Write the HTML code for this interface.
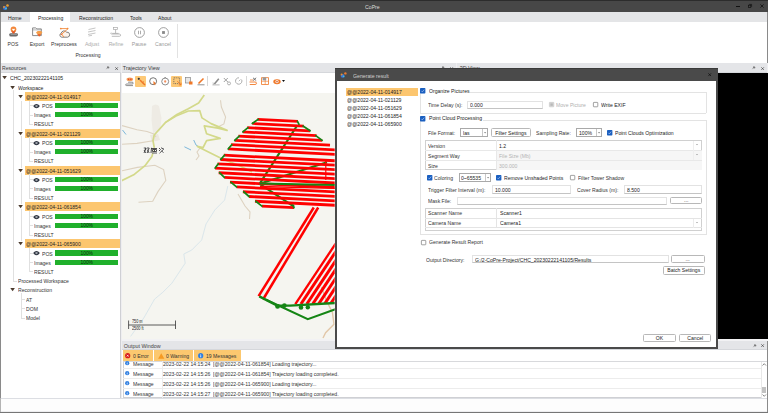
<!DOCTYPE html>
<html><head><meta charset="utf-8"><style>
*{box-sizing:border-box;margin:0;padding:0}
html,body{width:768px;height:413px;overflow:hidden;background:#f0f0f0;font-family:"Liberation Sans",sans-serif;font-size:5.1px;color:#222}
.a{position:absolute}
.t{position:absolute;white-space:nowrap;line-height:1}
svg{position:absolute;overflow:visible}
</style></head><body>
<div class="a" style="left:0px;top:0px;width:768px;height:12px;background:#474747"></div>
<div class="a" style="left:0px;top:0px;width:768px;height:1px;background:#2c2c2c"></div>
<div class="t" style="left:364.6px;top:4.43px;font-size:6.14px;color:#dcdcdc;transform:scaleX(0.8475);transform-origin:0 50%;">CoPre</div>
<svg style="left:2px;top:3px" width="8" height="8" viewBox="0 0 8 8"><circle cx="3" cy="5" r="2" fill="#3a6fd8"/><circle cx="2" cy="4" r="1" fill="#e8902a"/><circle cx="5.5" cy="2.5" r="1.3" fill="#e8a030"/><circle cx="4" cy="5.5" r="1" fill="#40c0e0"/></svg>
<div class="a" style="left:736px;top:6.2px;width:3.5px;height:0.8px;background:#111"></div>
<svg style="left:747.5px;top:4px" width="4" height="4" viewBox="0 0 4 4"><rect x="0.4" y="1.2" width="2.4" height="2.4" fill="none" stroke="#111" stroke-width="0.7"/><path d="M1.2 0.4H3.6V2.8" fill="none" stroke="#111" stroke-width="0.7"/></svg>
<svg style="left:759.5px;top:4.3px" width="4" height="4" viewBox="0 0 4 4"><path d="M0.4 0.4L3.6 3.6M3.6 0.4L0.4 3.6" stroke="#111" stroke-width="0.8"/></svg>
<div class="a" style="left:0px;top:12px;width:768px;height:10px;background:#e4e5e7"></div>
<div class="a" style="left:30px;top:12px;width:40px;height:10px;background:#fff"></div>
<div class="t" style="left:8px;top:15.49px;font-size:6.02px;color:#222;transform:scaleX(0.8475);transform-origin:0 50%;">Home</div>
<div class="t" style="left:37.7px;top:15.49px;font-size:6.02px;color:#222;transform:scaleX(0.8475);transform-origin:0 50%;">Processing</div>
<div class="t" style="left:78.6px;top:15.49px;font-size:6.02px;color:#222;transform:scaleX(0.8475);transform-origin:0 50%;">Reconstruction</div>
<div class="t" style="left:129.7px;top:15.49px;font-size:6.02px;color:#222;transform:scaleX(0.8475);transform-origin:0 50%;">Tools</div>
<div class="t" style="left:158px;top:15.49px;font-size:6.02px;color:#222;transform:scaleX(0.8475);transform-origin:0 50%;">About</div>
<div class="a" style="left:0px;top:22px;width:768px;height:41px;background:#fff"></div>
<div class="a" style="left:177px;top:24px;width:1px;height:34px;background:#e2e2e2"></div>
<div class="t" style="left:-16.7px;width:60px;text-align:center;top:41.4px;font-size:6.0px;color:#333;transform:scaleX(0.85)">POS</div>
<div class="t" style="left:7.299999999999997px;width:60px;text-align:center;top:41.4px;font-size:6.0px;color:#333;transform:scaleX(0.85)">Export</div>
<div class="t" style="left:34px;width:60px;text-align:center;top:41.4px;font-size:6.0px;color:#333;transform:scaleX(0.85)">Preprocess</div>
<div class="t" style="left:61.7px;width:60px;text-align:center;top:41.4px;font-size:6.0px;color:#aaa;transform:scaleX(0.85)">Adjust</div>
<div class="t" style="left:85.6px;width:60px;text-align:center;top:41.4px;font-size:6.0px;color:#aaa;transform:scaleX(0.85)">Refine</div>
<div class="t" style="left:109.19999999999999px;width:60px;text-align:center;top:41.4px;font-size:6.0px;color:#999;transform:scaleX(0.85)">Pause</div>
<div class="t" style="left:133.4px;width:60px;text-align:center;top:41.4px;font-size:6.0px;color:#999;transform:scaleX(0.85)">Cancel</div>
<div class="t" style="left:58px;width:60px;text-align:center;top:52.099999999999994px;font-size:6.0px;color:#333;transform:scaleX(0.85)">Processing</div>

<svg style="left:8px;top:26px" width="11" height="11" viewBox="0 0 11 11">
 <path d="M1.2 8.4 Q1.2 7.2 3 7.2 H8.5 Q10 7.2 10 8.6 Q10 10.6 8 10.6 H3 Q1.2 10.6 1.2 8.4Z" fill="#6a6a6a"/>
 <path d="M2.2 8.2 Q2.4 7.9 3.2 7.9 H8.5 Q9.2 8 9.2 8.6 H3Z" fill="#bdbdbd"/>
 <path d="M5.5 7.8 C3.3 5.6 2.6 4.6 2.6 3.5 A2.9 2.9 0 0 1 8.4 3.5 C8.4 4.6 7.7 5.6 5.5 7.8Z" fill="#f2873a"/>
 <path d="M5.5 7.8 C4.2 6.6 3.6 5.8 3.3 5.2 H7.7 C7.4 5.8 6.8 6.6 5.5 7.8Z" fill="#e25a2a"/>
 <path d="M5.5 5 L4.3 3.8 A0.7 0.7 0 0 1 5.5 3 A0.7 0.7 0 0 1 6.7 3.8Z" fill="#fff"/>
</svg>
<svg style="left:32px;top:27px" width="11" height="10" viewBox="0 0 11 10">
 <path d="M0.6 0.9 H3.8 L4.8 1.9 H9.3 V8.6 H0.6Z" fill="none" stroke="#6e6e6e" stroke-width="0.8"/>
 <path d="M0.6 2.9 H9.3" stroke="#888" stroke-width="0.6"/>
 <path d="M4 5.6 L5.6 4 H9 L10.4 5.6 L7.2 9.6Z" fill="#f59f4c"/>
 <path d="M5.2 7.2 H9.2 L7.2 9.6Z" fill="#e5582a"/>
</svg>
<svg style="left:59px;top:26.5px" width="11" height="11" viewBox="0 0 11 11">
 <path d="M2.6 10.2 A2.1 2.1 0 0 1 2.2 6.2 A3 3 0 0 1 7.6 5.2 A2.3 2.3 0 0 1 8.6 10.2Z" fill="#fdf3ea" stroke="#6a6a6a" stroke-width="0.85"/>
 <path d="M2 1.6 H9.2 M9.2 1.6 L2.6 7.2 L5 10" fill="none" stroke="#f28a3c" stroke-width="0.9"/>
 <path d="M8 0.6 L9.6 1.6 L8 2.6Z" fill="#f28a3c"/>
 <circle cx="1.8" cy="1.6" r="0.9" fill="#f28a3c"/><circle cx="2.6" cy="7.2" r="0.8" fill="#f07030"/>
</svg>
<svg style="left:86.5px;top:27px" width="10" height="10" viewBox="0 0 10 10">
 <path d="M1.5 2.5 L8.5 1 M1 5 L8.5 3.5 M1 7.5 L8.5 6 M1.5 9 L5 8.3" stroke="#b8b8b8" stroke-width="0.8" fill="none"/>
</svg>
<svg style="left:110px;top:27px" width="11" height="10" viewBox="0 0 11 10">
 <rect x="3.6" y="0.4" width="4" height="2" fill="none" stroke="#aaa" stroke-width="0.7"/>
 <path d="M5.6 2.4 V6.2" stroke="#aaa" stroke-width="0.8"/>
 <path d="M1.2 5.6 Q0.4 6.4 1.2 7 H9.4 Q10.6 7.2 10.6 8.2 Q10.6 9.3 9.4 9.3 H1.8" fill="none" stroke="#aaa" stroke-width="0.8"/>
 <path d="M2.2 6.4 H8.6" stroke="#aaa" stroke-width="0.8"/>
</svg>
<svg style="left:133.7px;top:26.9px" width="11" height="11" viewBox="0 0 11 11">
 <circle cx="5.5" cy="5.5" r="4.9" fill="none" stroke="#888" stroke-width="0.8"/>
 <path d="M4.5 3.7 V7.3 M6.5 3.7 V7.3" stroke="#888" stroke-width="0.7"/>
</svg>
<svg style="left:157.9px;top:26.9px" width="11" height="11" viewBox="0 0 11 11">
 <circle cx="5.5" cy="5.5" r="4.9" fill="none" stroke="#888" stroke-width="0.8"/>
 <rect x="4.1" y="4.1" width="2.8" height="2.8" fill="#888"/>
</svg>

<div class="a" style="left:0px;top:63px;width:768px;height:350px;background:#eeeef0"></div>
<div class="a" style="left:0px;top:12px;width:1px;height:401px;background:#8a8a8a"></div>
<div class="a" style="left:767px;top:12px;width:1px;height:51px;background:#8a8a8a"></div>
<div class="a" style="left:767px;top:339.8px;width:1px;height:73px;background:#8a8a8a"></div>
<div class="a" style="left:1px;top:63px;width:120px;height:10px;background:#e4e5e8;border-bottom:1px solid #d5d7db"></div>
<div class="t" style="left:2px;top:66.25px;font-size:5.51px;color:#3a3a3a;transform:scaleX(0.9259);transform-origin:0 50%;">Resources</div>
<svg style="left:106px;top:66.3px" width="3.5" height="3.5" viewBox="0 0 4 4"><path d="M2.2 0.4 L3.6 1.8 L2.6 2.4 L1.6 1.4Z" fill="#777" stroke="#555" stroke-width="0.5"/><path d="M1.4 1.2 L2.8 2.6 M1.9 2.1 L0.4 3.6" stroke="#555" stroke-width="0.6"/></svg>
<svg style="left:114.5px;top:66.5px" width="3.2" height="3.2" viewBox="0 0 4 4"><path d="M0.4 0.4 L3.6 3.6 M3.6 0.4 L0.4 3.6" stroke="#444" stroke-width="0.9"/></svg>
<div class="a" style="left:1px;top:73px;width:120px;height:325px;background:#fff;border-right:1px solid #cfd0d4"></div>
<div class="t" style="left:9.9px;top:75.39px;font-size:6.02px;color:#222;transform:scaleX(0.8475);transform-origin:0 50%;">CHC_20230222141105</div>
<div class="t" style="left:17.9px;top:84.61px;font-size:6.02px;color:#222;transform:scaleX(0.8475);transform-origin:0 50%;">Workspace</div>
<div class="a" style="left:13px;top:90.02px;width:0.8px;height:190.62px;background:#e0e0e0"></div>
<div class="a" style="left:13px;top:280.64px;width:4px;height:0.8px;background:#e0e0e0"></div>
<div class="a" style="left:24.8px;top:91.74px;width:95.7px;height:9px;background:#fcc66f"></div>
<div class="t" style="left:26.2px;top:93.83px;font-size:6.02px;color:#222;transform:scaleX(0.8475);transform-origin:0 50%;">@@2022-04-11-014917</div>
<div class="a" style="left:29px;top:100.53999999999999px;width:0.8px;height:23.360000000000014px;background:#e0e0e0"></div>
<div class="a" style="left:29px;top:105.46000000000001px;width:4px;height:0.8px;background:#e0e0e0"></div>
<div class="a" style="left:29px;top:114.68px;width:4px;height:0.8px;background:#e0e0e0"></div>
<div class="a" style="left:29px;top:123.9px;width:4px;height:0.8px;background:#e0e0e0"></div>
<svg style="left:32.9px;top:103.86000000000001px" width="7" height="4.2" viewBox="0 0 7 4.2"><path d="M0.1 2.1 Q3.5 -2.3 6.9 2.1 Q3.5 6.5 0.1 2.1Z" fill="#2e3440"/><circle cx="3.5" cy="2.1" r="1.05" fill="#d8dce0"/><circle cx="3.5" cy="2.1" r="0.5" fill="#2e3440"/></svg>
<div class="t" style="left:41.8px;top:103.05px;font-size:6.02px;color:#333;transform:scaleX(0.8475);transform-origin:0 50%;">POS</div>
<div class="a" style="left:55.4px;top:102.91000000000001px;width:62.6px;height:5.1px;background:#20b02c"></div>
<div class="t" style="left:55.4px;width:62.6px;text-align:center;top:104.06px;font-size:4.8px;color:#062a08">100%</div>
<div class="a" style="left:55.4px;top:112.13000000000001px;width:62.6px;height:5.1px;background:#20b02c"></div>
<div class="t" style="left:55.4px;width:62.6px;text-align:center;top:113.28px;font-size:4.8px;color:#062a08">100%</div>
<div class="t" style="left:34px;top:112.27px;font-size:6.02px;color:#333;transform:scaleX(0.8475);transform-origin:0 50%;">Images</div>
<div class="t" style="left:33.7px;top:121.49px;font-size:6.02px;color:#333;transform:scaleX(0.8475);transform-origin:0 50%;">RESULT</div>
<div class="a" style="left:24.8px;top:128.62px;width:95.7px;height:9px;background:#fcc66f"></div>
<div class="t" style="left:26.2px;top:130.71px;font-size:6.02px;color:#222;transform:scaleX(0.8475);transform-origin:0 50%;">@@2022-04-11-021129</div>
<div class="a" style="left:29px;top:137.42000000000002px;width:0.8px;height:23.359999999999985px;background:#e0e0e0"></div>
<div class="a" style="left:29px;top:142.34px;width:4px;height:0.8px;background:#e0e0e0"></div>
<div class="a" style="left:29px;top:151.56px;width:4px;height:0.8px;background:#e0e0e0"></div>
<div class="a" style="left:29px;top:160.78px;width:4px;height:0.8px;background:#e0e0e0"></div>
<svg style="left:32.9px;top:140.74px" width="7" height="4.2" viewBox="0 0 7 4.2"><path d="M0.1 2.1 Q3.5 -2.3 6.9 2.1 Q3.5 6.5 0.1 2.1Z" fill="#2e3440"/><circle cx="3.5" cy="2.1" r="1.05" fill="#d8dce0"/><circle cx="3.5" cy="2.1" r="0.5" fill="#2e3440"/></svg>
<div class="t" style="left:41.8px;top:139.93px;font-size:6.02px;color:#333;transform:scaleX(0.8475);transform-origin:0 50%;">POS</div>
<div class="a" style="left:55.4px;top:139.79px;width:62.6px;height:5.1px;background:#20b02c"></div>
<div class="t" style="left:55.4px;width:62.6px;text-align:center;top:140.94px;font-size:4.8px;color:#062a08">100%</div>
<div class="a" style="left:55.4px;top:149.01px;width:62.6px;height:5.1px;background:#20b02c"></div>
<div class="t" style="left:55.4px;width:62.6px;text-align:center;top:150.16px;font-size:4.8px;color:#062a08">100%</div>
<div class="t" style="left:34px;top:149.15px;font-size:6.02px;color:#333;transform:scaleX(0.8475);transform-origin:0 50%;">Images</div>
<div class="t" style="left:33.7px;top:158.37px;font-size:6.02px;color:#333;transform:scaleX(0.8475);transform-origin:0 50%;">RESULT</div>
<div class="a" style="left:24.8px;top:165.5px;width:95.7px;height:9px;background:#fcc66f"></div>
<div class="t" style="left:26.2px;top:167.59px;font-size:6.02px;color:#222;transform:scaleX(0.8475);transform-origin:0 50%;">@@2022-04-11-051629</div>
<div class="a" style="left:29px;top:174.3px;width:0.8px;height:23.360000000000014px;background:#e0e0e0"></div>
<div class="a" style="left:29px;top:179.22px;width:4px;height:0.8px;background:#e0e0e0"></div>
<div class="a" style="left:29px;top:188.44px;width:4px;height:0.8px;background:#e0e0e0"></div>
<div class="a" style="left:29px;top:197.66000000000003px;width:4px;height:0.8px;background:#e0e0e0"></div>
<svg style="left:32.9px;top:177.62px" width="7" height="4.2" viewBox="0 0 7 4.2"><path d="M0.1 2.1 Q3.5 -2.3 6.9 2.1 Q3.5 6.5 0.1 2.1Z" fill="#2e3440"/><circle cx="3.5" cy="2.1" r="1.05" fill="#d8dce0"/><circle cx="3.5" cy="2.1" r="0.5" fill="#2e3440"/></svg>
<div class="t" style="left:41.8px;top:176.81px;font-size:6.02px;color:#333;transform:scaleX(0.8475);transform-origin:0 50%;">POS</div>
<div class="a" style="left:55.4px;top:176.67px;width:62.6px;height:5.1px;background:#20b02c"></div>
<div class="t" style="left:55.4px;width:62.6px;text-align:center;top:177.82px;font-size:4.8px;color:#062a08">100%</div>
<div class="a" style="left:55.4px;top:185.89px;width:62.6px;height:5.1px;background:#20b02c"></div>
<div class="t" style="left:55.4px;width:62.6px;text-align:center;top:187.04px;font-size:4.8px;color:#062a08">100%</div>
<div class="t" style="left:34px;top:186.03px;font-size:6.02px;color:#333;transform:scaleX(0.8475);transform-origin:0 50%;">Images</div>
<div class="t" style="left:33.7px;top:195.25px;font-size:6.02px;color:#333;transform:scaleX(0.8475);transform-origin:0 50%;">RESULT</div>
<div class="a" style="left:24.8px;top:202.38px;width:95.7px;height:9px;background:#fcc66f"></div>
<div class="t" style="left:26.2px;top:204.47px;font-size:6.02px;color:#222;transform:scaleX(0.8475);transform-origin:0 50%;">@@2022-04-11-061854</div>
<div class="a" style="left:29px;top:211.18px;width:0.8px;height:23.360000000000014px;background:#e0e0e0"></div>
<div class="a" style="left:29px;top:216.10000000000002px;width:4px;height:0.8px;background:#e0e0e0"></div>
<div class="a" style="left:29px;top:225.32px;width:4px;height:0.8px;background:#e0e0e0"></div>
<div class="a" style="left:29px;top:234.54000000000002px;width:4px;height:0.8px;background:#e0e0e0"></div>
<svg style="left:32.9px;top:214.50000000000003px" width="7" height="4.2" viewBox="0 0 7 4.2"><path d="M0.1 2.1 Q3.5 -2.3 6.9 2.1 Q3.5 6.5 0.1 2.1Z" fill="#2e3440"/><circle cx="3.5" cy="2.1" r="1.05" fill="#d8dce0"/><circle cx="3.5" cy="2.1" r="0.5" fill="#2e3440"/></svg>
<div class="t" style="left:41.8px;top:213.69px;font-size:6.02px;color:#333;transform:scaleX(0.8475);transform-origin:0 50%;">POS</div>
<div class="a" style="left:55.4px;top:213.55px;width:62.6px;height:5.1px;background:#20b02c"></div>
<div class="t" style="left:55.4px;width:62.6px;text-align:center;top:214.70px;font-size:4.8px;color:#062a08">100%</div>
<div class="a" style="left:55.4px;top:222.76999999999998px;width:62.6px;height:5.1px;background:#20b02c"></div>
<div class="t" style="left:55.4px;width:62.6px;text-align:center;top:223.92px;font-size:4.8px;color:#062a08">100%</div>
<div class="t" style="left:34px;top:222.91px;font-size:6.02px;color:#333;transform:scaleX(0.8475);transform-origin:0 50%;">Images</div>
<div class="t" style="left:33.7px;top:232.13px;font-size:6.02px;color:#333;transform:scaleX(0.8475);transform-origin:0 50%;">RESULT</div>
<div class="a" style="left:24.8px;top:239.26px;width:95.7px;height:9px;background:#fcc66f"></div>
<div class="t" style="left:26.2px;top:241.35px;font-size:6.02px;color:#222;transform:scaleX(0.8475);transform-origin:0 50%;">@@2022-04-11-065900</div>
<div class="a" style="left:29px;top:248.06px;width:0.8px;height:23.360000000000014px;background:#e0e0e0"></div>
<div class="a" style="left:29px;top:252.98000000000002px;width:4px;height:0.8px;background:#e0e0e0"></div>
<div class="a" style="left:29px;top:262.2px;width:4px;height:0.8px;background:#e0e0e0"></div>
<div class="a" style="left:29px;top:271.42px;width:4px;height:0.8px;background:#e0e0e0"></div>
<svg style="left:32.9px;top:251.38000000000002px" width="7" height="4.2" viewBox="0 0 7 4.2"><path d="M0.1 2.1 Q3.5 -2.3 6.9 2.1 Q3.5 6.5 0.1 2.1Z" fill="#2e3440"/><circle cx="3.5" cy="2.1" r="1.05" fill="#d8dce0"/><circle cx="3.5" cy="2.1" r="0.5" fill="#2e3440"/></svg>
<div class="t" style="left:41.8px;top:250.57px;font-size:6.02px;color:#333;transform:scaleX(0.8475);transform-origin:0 50%;">POS</div>
<div class="a" style="left:55.4px;top:250.43px;width:62.6px;height:5.1px;background:#20b02c"></div>
<div class="t" style="left:55.4px;width:62.6px;text-align:center;top:251.58px;font-size:4.8px;color:#062a08">100%</div>
<div class="a" style="left:55.4px;top:259.65px;width:62.6px;height:5.1px;background:#20b02c"></div>
<div class="t" style="left:55.4px;width:62.6px;text-align:center;top:260.80px;font-size:4.8px;color:#062a08">100%</div>
<div class="t" style="left:34px;top:259.79px;font-size:6.02px;color:#333;transform:scaleX(0.8475);transform-origin:0 50%;">Images</div>
<div class="t" style="left:33.7px;top:269.01px;font-size:6.02px;color:#333;transform:scaleX(0.8475);transform-origin:0 50%;">RESULT</div>
<div class="a" style="left:21px;top:100.53999999999999px;width:0.8px;height:143.22px;background:#e0e0e0"></div>
<div class="t" style="left:18px;top:278.23px;font-size:6.02px;color:#333;transform:scaleX(0.8475);transform-origin:0 50%;">Processed Workspace</div>
<div class="t" style="left:18px;top:287.45px;font-size:6.02px;color:#333;transform:scaleX(0.8475);transform-origin:0 50%;">Reconstruction</div>
<div class="a" style="left:21px;top:292.86px;width:0.8px;height:24.660000000000025px;background:#e0e0e0"></div>
<div class="a" style="left:21px;top:299.08000000000004px;width:4px;height:0.8px;background:#e0e0e0"></div>
<div class="t" style="left:26.2px;top:296.67px;font-size:6.02px;color:#333;transform:scaleX(0.8475);transform-origin:0 50%;">AT</div>
<div class="a" style="left:21px;top:308.3px;width:4px;height:0.8px;background:#e0e0e0"></div>
<div class="t" style="left:26.2px;top:305.89px;font-size:6.02px;color:#333;transform:scaleX(0.8475);transform-origin:0 50%;">DOM</div>
<div class="a" style="left:21px;top:317.52000000000004px;width:4px;height:0.8px;background:#e0e0e0"></div>
<div class="t" style="left:26.2px;top:315.11px;font-size:6.02px;color:#333;transform:scaleX(0.8475);transform-origin:0 50%;">Model</div>
<svg style="left:1.8000000000000003px;top:75.3px" width="5.2" height="5" viewBox="0 0 5.2 5"><rect x="0" y="0" width="5.2" height="5" fill="#fff"/><path d="M0.3 0.9 H4.9 L2.6 4.2Z" fill="#4b3b2e"/></svg>
<svg style="left:10.3px;top:84.52px" width="5.2" height="5" viewBox="0 0 5.2 5"><rect x="0" y="0" width="5.2" height="5" fill="#fff"/><path d="M0.3 0.9 H4.9 L2.6 4.2Z" fill="#4b3b2e"/></svg>
<svg style="left:18.2px;top:93.74px" width="5.2" height="5" viewBox="0 0 5.2 5"><rect x="0" y="0" width="5.2" height="5" fill="#fff"/><path d="M0.3 0.9 H4.9 L2.6 4.2Z" fill="#4b3b2e"/></svg>
<svg style="left:18.2px;top:130.62px" width="5.2" height="5" viewBox="0 0 5.2 5"><rect x="0" y="0" width="5.2" height="5" fill="#fff"/><path d="M0.3 0.9 H4.9 L2.6 4.2Z" fill="#4b3b2e"/></svg>
<svg style="left:18.2px;top:167.5px" width="5.2" height="5" viewBox="0 0 5.2 5"><rect x="0" y="0" width="5.2" height="5" fill="#fff"/><path d="M0.3 0.9 H4.9 L2.6 4.2Z" fill="#4b3b2e"/></svg>
<svg style="left:18.2px;top:204.38px" width="5.2" height="5" viewBox="0 0 5.2 5"><rect x="0" y="0" width="5.2" height="5" fill="#fff"/><path d="M0.3 0.9 H4.9 L2.6 4.2Z" fill="#4b3b2e"/></svg>
<svg style="left:18.2px;top:241.26px" width="5.2" height="5" viewBox="0 0 5.2 5"><rect x="0" y="0" width="5.2" height="5" fill="#fff"/><path d="M0.3 0.9 H4.9 L2.6 4.2Z" fill="#4b3b2e"/></svg>
<svg style="left:9.9px;top:287.36px" width="5.2" height="5" viewBox="0 0 5.2 5"><rect x="0" y="0" width="5.2" height="5" fill="#fff"/><path d="M0.3 0.9 H4.9 L2.6 4.2Z" fill="#4b3b2e"/></svg>
<div class="a" style="left:122.3px;top:63px;width:334px;height:10px;background:#e4e5e8;border-bottom:1px solid #d5d7db"></div>
<div class="t" style="left:122.8px;top:66.40px;font-size:5.40px;color:#3a3a3a;transform:scaleX(1.0000);transform-origin:0 50%;">Trajectory View</div>
<div class="a" style="left:457.4px;top:63px;width:310px;height:10px;background:#e4e5e8;border-bottom:1px solid #d5d7db"></div>
<div class="t" style="left:459.7px;top:66.40px;font-size:5.40px;color:#3a3a3a;transform:scaleX(1.0000);transform-origin:0 50%;">3D View</div>
<svg style="left:440.5px;top:66.3px" width="3.5" height="3.5" viewBox="0 0 4 4"><path d="M2.2 0.4 L3.6 1.8 L2.6 2.4 L1.6 1.4Z" fill="#777" stroke="#555" stroke-width="0.5"/><path d="M1.4 1.2 L2.8 2.6 M1.9 2.1 L0.4 3.6" stroke="#555" stroke-width="0.6"/></svg>
<svg style="left:449.5px;top:66.5px" width="3.2" height="3.2" viewBox="0 0 4 4"><path d="M0.4 0.4 L3.6 3.6 M3.6 0.4 L0.4 3.6" stroke="#444" stroke-width="0.9"/></svg>
<svg style="left:752px;top:66.3px" width="3.5" height="3.5" viewBox="0 0 4 4"><path d="M2.2 0.4 L3.6 1.8 L2.6 2.4 L1.6 1.4Z" fill="#777" stroke="#555" stroke-width="0.5"/><path d="M1.4 1.2 L2.8 2.6 M1.9 2.1 L0.4 3.6" stroke="#555" stroke-width="0.6"/></svg>
<svg style="left:761px;top:66.5px" width="3.2" height="3.2" viewBox="0 0 4 4"><path d="M0.4 0.4 L3.6 3.6 M3.6 0.4 L0.4 3.6" stroke="#444" stroke-width="0.9"/></svg>
<div class="a" style="left:122.3px;top:73px;width:334px;height:20.4px;background:#fff"></div>
<div class="a" style="left:135.1px;top:75.8px;width:11.2px;height:11px;background:#fdc977;border-radius:1px"></div>
<div class="a" style="left:171px;top:75.8px;width:11px;height:11px;background:#fdc977;border-radius:1px"></div>
<div class="a" style="left:207.4px;top:75.9px;width:0.8px;height:10px;background:#d8d8d8"></div>
<div class="a" style="left:245.6px;top:75.9px;width:0.8px;height:10px;background:#d8d8d8"></div>

<svg style="left:124.5px;top:76.8px" width="9" height="9" viewBox="0 0 9 9">
 <ellipse cx="4.8" cy="2.3" rx="3.3" ry="1.9" fill="#f5a05a"/><circle cx="3.6" cy="2.2" r="0.75" fill="#e0402a"/><circle cx="5.9" cy="2.3" r="0.75" fill="#e0402a"/>
 <path d="M3 5.2 H7.2 Q8.2 5.2 8.2 6.1 Q8.2 7 7.2 7 H1.8 Q0.6 7 0.6 7.9 Q0.6 8.6 1.6 8.6 H8" fill="none" stroke="#6a6a6a" stroke-width="0.75"/>
</svg>
<svg style="left:136.5px;top:77px" width="9" height="9" viewBox="0 0 9 9">
 <circle cx="1.8" cy="1.8" r="1.1" fill="#333"/><path d="M3 3 L8 8" stroke="#f07828" stroke-width="1.5"/><path d="M5 6 L7 4.5" stroke="#f07828" stroke-width="0.9"/>
</svg>
<svg style="left:149px;top:77.2px" width="8.4" height="8.4" viewBox="0 0 8 8">
 <path d="M4 0.7 A3.3 3.3 0 1 1 3.9 7.3 A3.3 3.3 0 1 1 4 0.7Z" fill="none" stroke="#5a5a5a" stroke-width="0.8"/><path d="M4.2 3.8 L6.8 6.2 L5.6 6.3 L6.2 7.6 L5.5 7.8 L5 6.6 L4.3 7.3Z" fill="#f07828"/>
</svg>
<svg style="left:161.2px;top:77.2px" width="8.4" height="8.4" viewBox="0 0 8 8">
 <circle cx="4" cy="4.3" r="3.3" fill="none" stroke="#777" stroke-width="0.8"/><path d="M3.2 0.6 H4.8" stroke="#777" stroke-width="0.7"/><circle cx="4" cy="4.3" r="1.1" fill="#f29060"/>
</svg>
<svg style="left:172.5px;top:77.2px" width="8.4" height="8.4" viewBox="0 0 8 8">
 <rect x="0.8" y="0.8" width="5.5" height="5.5" fill="none" stroke="#555" stroke-width="0.7" stroke-dasharray="1 0.8"/><path d="M4.2 4 L7.6 7.6 M5.5 7.5 H7.6 V5.4" stroke="#f07828" stroke-width="0.9" fill="none"/>
</svg>
<svg style="left:185px;top:77.3px" width="8" height="8" viewBox="0 0 8 8">
 <rect x="0.5" y="0.5" width="5" height="5.5" fill="#e8e8e8" stroke="#888" stroke-width="0.7"/><rect x="4" y="4.5" width="3.5" height="3" fill="#f07828"/>
</svg>
<svg style="left:197px;top:77px" width="8" height="8.5" viewBox="0 0 8 8.5">
 <path d="M1.5 6.5 L6.5 1.5" stroke="#f07828" stroke-width="1.6"/><path d="M0.5 7.8 H7.5" stroke="#444" stroke-width="0.6"/>
</svg>
<svg style="left:211.5px;top:77px" width="8" height="8.5" viewBox="0 0 8 8.5">
 <path d="M1.8 6.6 L6.2 1.2 L7.4 2.2 L3 7.4Z" fill="#8a8a8a"/><path d="M0.4 7.9 H7.6" stroke="#999" stroke-width="0.7"/><path d="M1 5.5 L1.6 7.6" stroke="#999" stroke-width="0.6"/>
</svg>
<svg style="left:223px;top:77px" width="8" height="8.5" viewBox="0 0 8 8.5">
 <path d="M0.8 1 L4.8 5 M4.8 1 L0.8 5" stroke="#a0a0a0" stroke-width="1" fill="none"/><circle cx="6" cy="6.4" r="1.5" fill="none" stroke="#a0a0a0" stroke-width="0.8"/>
</svg>
<svg style="left:235px;top:77.3px" width="8" height="8" viewBox="0 0 8 8">
 <path d="M6.6 2.6 A3.2 3.2 0 1 1 4 0.8" fill="none" stroke="#999" stroke-width="0.8"/><path d="M3.8 4.2 L5.5 2.5" stroke="#999" stroke-width="0.7"/>
</svg>
<svg style="left:248.8px;top:77px" width="8" height="8.5" viewBox="0 0 8 8.5">
 <path d="M4 0.8 L7.2 3.6 M7.2 0.8 L4 3.6" stroke="#555" stroke-width="0.8"/><path d="M0.5 5 H6 Q7.5 5 7.5 6.2 Q7.5 7.5 6 7.5 H0.8" fill="none" stroke="#f07828" stroke-width="0.9"/><path d="M1 3 H4" stroke="#f07828" stroke-width="0.8"/>
</svg>
<svg style="left:261px;top:77.2px" width="8" height="8.2" viewBox="0 0 8 8">
 <rect x="0.6" y="0.6" width="6.8" height="6.8" fill="#fff" stroke="#f07828" stroke-width="0.8"/><path d="M0.6 4.2 H7.4 M4.2 0.6 V7.4" stroke="#f07828" stroke-width="0.6"/><rect x="1.6" y="0.3" width="3.6" height="3" fill="#9a9a9a"/>
</svg>
<svg style="left:273px;top:78.6px" width="8" height="5.5" viewBox="0 0 8 5.5">
 <ellipse cx="4" cy="2.75" rx="3.7" ry="2.4" fill="#f07828"/><ellipse cx="4" cy="2.75" rx="1.6" ry="1.4" fill="#fff"/><circle cx="4" cy="2.75" r="0.8" fill="#c04010"/>
</svg>
<svg style="left:281.8px;top:80.3px" width="3" height="2" viewBox="0 0 3 2"><path d="M0 0 H3 L1.5 2Z" fill="#111"/></svg>

<div class="a" style="left:122px;top:93.4px;width:334.7px;height:245.4px;background:#f5f5f0"></div>
<svg style="left:0;top:0" width="768" height="413" viewBox="0 0 768 413">
<defs><clipPath id="mc"><rect x="122" y="93.4" width="212.7" height="245.4"/></clipPath>
<clipPath id="blk"><polygon points="257.1,118.6 297.5,120.6 299.0,124.0 305.6,125.6 311.8,131.2 320.0,134.5 325.5,140.5 336.0,145.0 336.0,206.7 294.0,208.5 263.4,208.3 258.3,204.1 243.0,192.7 229.0,183.8 217.6,176.2 213.8,172.3 216.4,166.0 222.7,157.1 231.6,145.6 239.3,136.7 248.2,127.8"/></clipPath>
<clipPath id="stp"><polygon points="338.0,238.0 294.0,304.0 338.0,304.0"/></clipPath>
</defs><g clip-path="url(#mc)">
<path d="M152 106 Q156 103 159 106 L161.5 118 L160 131 L153 133 L151.5 120Z" fill="#eeebe4"/>
<path d="M150 135 L158 134 L160 140 L152 142Z" fill="#ece8e0"/>
<polyline points="122.0,125.6 137.0,129.8 147.0,131.5 153.9,134.0 156.0,137.0" fill="none" stroke="#ddd2c0" stroke-width="1.1"/>
<polyline points="122.0,144.2 137.0,143.4 153.0,140.8" fill="none" stroke="#ddd2c0" stroke-width="1.1"/>
<polyline points="122.0,170.7 137.4,167.4 154.9,165.3 163.6,169.6 165.8,180.5 158.1,191.4 152.7,201.2 138.5,202.3" fill="none" stroke="#ddd2c0" stroke-width="1.1"/>
<polyline points="220.5,100.2 221.4,107.0 225.6,117.1 223.9,123.9 218.8,126.4" fill="none" stroke="#ddd2c0" stroke-width="1.1"/>
<polyline points="200.0,148.0 197.0,152.0 199.0,156.0 196.0,160.0" fill="none" stroke="#ddd2c0" stroke-width="1.1"/>
<polyline points="238.0,194.0 241.5,200.0 245.0,206.0 250.0,212.0 249.5,219.0" fill="none" stroke="#ddd2c0" stroke-width="1.1"/>
<polyline points="227.8,186.0 224.6,200.1 214.8,210.0 206.0,224.0 201.7,240.0 191.8,250.0 183.8,254.0 185.2,263.2 171.9,283.2 162.6,292.5 154.6,299.1 143.9,317.8 130.6,336.4" fill="none" stroke="#cfdfe8" stroke-width="0.7"/>
<polyline points="122.5,130.0 126.0,134.5" fill="none" stroke="#6fb0d8" stroke-width="0.9"/>
<polyline points="184.4,146.8 191.0,150.0" fill="none" stroke="#6fb0d8" stroke-width="0.9"/>
<polyline points="193.7,140.0 196.0,145.0 200.0,147.6" fill="none" stroke="#6fb0d8" stroke-width="0.9"/>
<polyline points="204.3,95.1 198.6,103.1 188.3,108.8 176.9,114.5 165.6,122.4 154.2,135.0 153.0,140.7 154.2,147.5 151.9,156.6 145.0,165.7 133.7,174.8 121.0,181.0" fill="none" stroke="#d3d98a" stroke-width="1.7" stroke-linejoin="round"/>
<polyline points="165.6,122.4 176.0,116.0 188.3,111.0 199.7,110.6 202.0,117.9 211.1,123.6 227.1,130.4 218.0,128.1 204.3,125.9 206.6,133.8 220.2,138.4 206.6,140.7 203.1,147.5 197.4,146.4 222.5,158.9 240.0,166.0 252.0,172.0" fill="none" stroke="#d3d98a" stroke-width="1.7" stroke-linejoin="round"/>
<polyline points="321.4,287.0 326.4,300.5 332.4,312.4 334.0,324.2 325.6,332.7 323.0,338.0" fill="none" stroke="#e2c7a8" stroke-width="1.4"/>
<polyline points="296.5,126.5 259.6,183.8" fill="none" stroke="#158515" stroke-width="2.2"/>
<polyline points="259.6,183.8 294.0,206.7" fill="none" stroke="#158515" stroke-width="2.2"/>
<polyline points="259.6,183.8 327.0,162.2" fill="none" stroke="#158515" stroke-width="2.2"/>
<line x1="257.5" y1="119.28" x2="298.0" y2="121.30" stroke="#ff0000" stroke-width="2.8"/>
<line x1="252.3" y1="123.46" x2="303.8" y2="126.04" stroke="#ff0000" stroke-width="2.8"/>
<line x1="247.2" y1="127.66" x2="310.1" y2="130.80" stroke="#ff0000" stroke-width="2.8"/>
<line x1="242.8" y1="131.89" x2="316.6" y2="135.58" stroke="#ff0000" stroke-width="2.8"/>
<line x1="238.4" y1="136.12" x2="322.2" y2="140.31" stroke="#ff0000" stroke-width="2.8"/>
<line x1="234.7" y1="140.39" x2="330.0" y2="145.15" stroke="#ff0000" stroke-width="2.8"/>
<line x1="231.1" y1="144.66" x2="340.0" y2="150.10" stroke="#ff0000" stroke-width="2.8"/>
<line x1="228.1" y1="148.96" x2="340.0" y2="154.55" stroke="#ff0000" stroke-width="2.8"/>
<line x1="223.8" y1="155.19" x2="340.0" y2="161.00" stroke="#ff0000" stroke-width="2.8"/>
<line x1="220.6" y1="159.48" x2="340.0" y2="165.45" stroke="#ff0000" stroke-width="2.8"/>
<line x1="217.5" y1="163.78" x2="340.0" y2="169.90" stroke="#ff0000" stroke-width="2.8"/>
<line x1="215.1" y1="168.11" x2="340.0" y2="174.35" stroke="#ff0000" stroke-width="2.8"/>
<line x1="218.7" y1="172.73" x2="340.0" y2="178.80" stroke="#ff0000" stroke-width="2.8"/>
<line x1="224.3" y1="177.46" x2="340.0" y2="183.25" stroke="#ff0000" stroke-width="2.8"/>
<line x1="230.0" y1="182.20" x2="340.0" y2="187.70" stroke="#ff0000" stroke-width="2.8"/>
<line x1="236.5" y1="186.97" x2="340.0" y2="192.15" stroke="#ff0000" stroke-width="2.8"/>
<line x1="242.9" y1="191.75" x2="340.0" y2="196.60" stroke="#ff0000" stroke-width="2.8"/>
<line x1="249.0" y1="196.50" x2="340.0" y2="201.05" stroke="#ff0000" stroke-width="2.8"/>
<line x1="255.0" y1="201.25" x2="340.0" y2="205.50" stroke="#ff0000" stroke-width="2.8"/>
<line x1="261.9" y1="206.05" x2="294.0" y2="207.65" stroke="#ff0000" stroke-width="2.8"/>
<line x1="258.3" y1="119.28" x2="252.3" y2="123.46" stroke="#158515" stroke-width="1.7" stroke-linecap="round"/>
<line x1="303.0" y1="126.04" x2="310.1" y2="130.80" stroke="#158515" stroke-width="1.7" stroke-linecap="round"/>
<line x1="248.0" y1="127.66" x2="242.8" y2="131.89" stroke="#158515" stroke-width="1.7" stroke-linecap="round"/>
<line x1="315.8" y1="135.58" x2="322.2" y2="140.31" stroke="#158515" stroke-width="1.7" stroke-linecap="round"/>
<line x1="239.2" y1="136.12" x2="234.7" y2="140.39" stroke="#158515" stroke-width="1.7" stroke-linecap="round"/>
<line x1="231.9" y1="144.66" x2="228.1" y2="148.96" stroke="#158515" stroke-width="1.7" stroke-linecap="round"/>
<line x1="224.6" y1="155.19" x2="220.6" y2="159.48" stroke="#158515" stroke-width="1.7" stroke-linecap="round"/>
<line x1="218.3" y1="163.78" x2="215.1" y2="168.11" stroke="#158515" stroke-width="1.7" stroke-linecap="round"/>
<line x1="219.5" y1="172.73" x2="224.3" y2="177.46" stroke="#158515" stroke-width="1.7" stroke-linecap="round"/>
<line x1="230.8" y1="182.20" x2="236.5" y2="186.97" stroke="#158515" stroke-width="1.7" stroke-linecap="round"/>
<line x1="243.7" y1="191.75" x2="249.0" y2="196.50" stroke="#158515" stroke-width="1.7" stroke-linecap="round"/>
<line x1="255.8" y1="201.25" x2="261.9" y2="206.05" stroke="#158515" stroke-width="1.7" stroke-linecap="round"/>
<line x1="297.5" y1="121.30" x2="299.0" y2="124.30" stroke="#158515" stroke-width="1.7" stroke-linecap="round"/>
<line x1="294" y1="207.65" x2="293" y2="205.15" stroke="#158515" stroke-width="1.7" stroke-linecap="round"/>
<line x1="259.6" y1="183.5" x2="336" y2="185" stroke="#158515" stroke-width="2"/>
<line x1="260" y1="186.5" x2="336" y2="188.5" stroke="#ff0000" stroke-width="1.3"/>
<line x1="325.8" y1="160.9" x2="325.8" y2="180" stroke="#ff0000" stroke-width="1.2"/>
<line x1="313.8" y1="207.5" x2="258.6" y2="296.2" stroke="#ff0000" stroke-width="2.5"/>
<line x1="318.2" y1="207.5" x2="263.0" y2="299.5" stroke="#ff0000" stroke-width="2.5"/>
<g clip-path="url(#stp)">
<line x1="295.0" y1="304" x2="341.0" y2="235" stroke="#ff0000" stroke-width="3"/>
<line x1="300.9" y1="304" x2="346.9" y2="235" stroke="#ff0000" stroke-width="3"/>
<line x1="306.8" y1="304" x2="352.8" y2="235" stroke="#ff0000" stroke-width="3"/>
<line x1="312.7" y1="304" x2="358.7" y2="235" stroke="#ff0000" stroke-width="3"/>
<line x1="318.6" y1="304" x2="364.6" y2="235" stroke="#ff0000" stroke-width="3"/>
<line x1="324.5" y1="304" x2="370.5" y2="235" stroke="#ff0000" stroke-width="3"/>
<line x1="330.4" y1="304" x2="376.4" y2="235" stroke="#ff0000" stroke-width="3"/>
<line x1="336.3" y1="304" x2="382.3" y2="235" stroke="#ff0000" stroke-width="3"/>
<line x1="342.2" y1="304" x2="388.2" y2="235" stroke="#ff0000" stroke-width="3"/>
<line x1="348.1" y1="304" x2="394.1" y2="235" stroke="#ff0000" stroke-width="3"/>
<line x1="354.0" y1="304" x2="400.0" y2="235" stroke="#ff0000" stroke-width="3"/>
<line x1="359.9" y1="304" x2="405.9" y2="235" stroke="#ff0000" stroke-width="3"/>
</g>
<polyline points="259.3,296.4 277.1,305.6 290.0,305.6 336.0,303.0" fill="none" stroke="#158515" stroke-width="2.4"/>
<polyline points="266.1,299.8 307.8,319.2 336.0,309.0" fill="none" stroke="#158515" stroke-width="2.1"/>
<circle cx="277.6" cy="306.4" r="2.4" fill="#158515"/>
<circle cx="284.4" cy="305.6" r="2.3" fill="#158515"/>
<circle cx="301" cy="307.5" r="2.3" fill="#158515"/>
<circle cx="307.8" cy="307.2" r="2.2" fill="#158515"/>
<path d="M128.6 325 H175.5 M128.6 320.5 V329 M175.5 320.5 V329" stroke="#333" stroke-width="0.8" fill="none"/>
</g></svg>
<div class="t" style="left:132px;top:320.16px;font-size:4.48px;color:#222;transform:scaleX(0.8475);transform-origin:0 50%;">750 m</div>
<div class="t" style="left:132px;top:326.96px;font-size:4.48px;color:#222;transform:scaleX(0.8475);transform-origin:0 50%;">2500 ft</div>
<svg style="left:143px;top:146.5px" width="22" height="7" viewBox="0 0 22 7"><g stroke="#fff" stroke-width="1.6" fill="none" opacity="0.7"><path d="M0.8 1 H3 L1.5 4 M3 1 L1 6 M1.2 3.5 L3 6 M3.8 1 H6.2 L4.2 6 M4.2 2.5 L6.2 6"/><path d="M8.5 0.8 L8 6 M8.2 1.5 H14 M9.5 2.5 H13.5 V4.5 H9.5Z M11.5 2.5 V4.5 M9 6 H14"/><path d="M16 1 L17.5 2.5 L16 4 M18 0.8 L20.8 2 L16.5 6.2 M18.5 4 L20.5 5.5"/></g><g stroke="#3c3c3c" stroke-width="0.9" fill="none"><path d="M0.8 1 H3 L1.5 4 M3 1 L1 6 M1.2 3.5 L3 6 M3.8 1 H6.2 L4.2 6 M4.2 2.5 L6.2 6"/><path d="M8.5 0.8 L8 6 M8.2 1.5 H14 M9.5 2.5 H13.5 V4.5 H9.5Z M11.5 2.5 V4.5 M9 6 H14"/><path d="M16 1 L17.5 2.5 L16 4 M18 0.8 L20.8 2 L16.5 6.2 M18.5 4 L20.5 5.5"/></g></svg>
<div class="a" style="left:457.4px;top:73px;width:311px;height:265.8px;background:#000"></div>
<div class="a" style="left:122px;top:338.8px;width:646px;height:2px;background:#f2f2f4"></div>
<div class="a" style="left:122px;top:340.8px;width:645px;height:9.5px;background:#e4e5e8;border-bottom:1px solid #d5d7db"></div>
<div class="t" style="left:123.8px;top:343.60px;font-size:5.40px;color:#444;transform:scaleX(1.0000);transform-origin:0 50%;">Output Window</div>
<svg style="left:752.5px;top:343.5px" width="3.5" height="3.5" viewBox="0 0 4 4"><path d="M2.2 0.4 L3.6 1.8 L2.6 2.4 L1.6 1.4Z" fill="#777" stroke="#555" stroke-width="0.5"/><path d="M1.4 1.2 L2.8 2.6 M1.9 2.1 L0.4 3.6" stroke="#555" stroke-width="0.6"/></svg>
<svg style="left:761px;top:343.7px" width="3.2" height="3.2" viewBox="0 0 4 4"><path d="M0.4 0.4 L3.6 3.6 M3.6 0.4 L0.4 3.6" stroke="#444" stroke-width="0.9"/></svg>
<div class="a" style="left:122px;top:350.2px;width:645px;height:48px;background:#fff"></div>
<div class="a" style="left:122.6px;top:350.2px;width:30.8px;height:10.8px;background:#fcc86f"></div>
<div class="a" style="left:154.4px;top:350.2px;width:39px;height:10.8px;background:#fcc86f"></div>
<div class="a" style="left:194.4px;top:350.2px;width:46.6px;height:10.8px;background:#fcc86f"></div>
<svg style="left:125px;top:353px" width="5.4" height="5.4" viewBox="0 0 6 6"><circle cx="3" cy="3" r="2.9" fill="#d81a1a"/><path d="M2 2 L4 4 M4 2 L2 4" stroke="#fff" stroke-width="0.8"/></svg>
<div class="t" style="left:133.3px;top:353.19px;font-size:6.02px;color:#333;transform:scaleX(0.8475);transform-origin:0 50%;">0 Error</div>
<svg style="left:157.5px;top:352.6px" width="6.5" height="5.8" viewBox="0 0 6.5 5.8"><path d="M3.25 0.2 L6.4 5.7 H0.1Z" fill="#f59a23"/></svg>
<div class="t" style="left:165.6px;top:353.19px;font-size:6.02px;color:#333;transform:scaleX(0.8475);transform-origin:0 50%;">0 Warning</div>
<svg style="left:197.6px;top:353px" width="5.4" height="5.4" viewBox="0 0 6 6"><circle cx="3" cy="3" r="2.9" fill="#2f7ee0"/><path d="M3 2.5 V4.8" stroke="#fff" stroke-width="0.9"/><circle cx="3" cy="1.5" r="0.5" fill="#fff"/></svg>
<div class="t" style="left:205.5px;top:353.19px;font-size:6.02px;color:#333;transform:scaleX(0.8475);transform-origin:0 50%;">19 Messages</div>
<div class="a" style="left:123px;top:361px;width:644px;height:37px;border-left:0.8px solid #d0d1d5;border-top:0.8px solid #d8d9dc;border-bottom:1px solid #cfd0d4"></div>
<svg style="left:124.9px;top:361.1px" width="4.4" height="4.4" viewBox="0 0 6 6"><circle cx="3" cy="3" r="2.9" fill="#2f7ee0"/><path d="M3 2.5 V4.8" stroke="#fff" stroke-width="0.9"/><circle cx="3" cy="1.5" r="0.5" fill="#fff"/></svg>
<div class="t" style="left:132.7px;top:360.89px;font-size:6.02px;color:#333;transform:scaleX(0.8475);transform-origin:0 50%;">Message</div>
<div class="t" style="left:162.9px;top:360.89px;font-size:6.02px;color:#333;transform:scaleX(0.8475);transform-origin:0 50%;">2023-02-22 14:15:24</div>
<div class="t" style="left:212.9px;top:360.89px;font-size:6.02px;color:#333;transform:scaleX(0.8475);transform-origin:0 50%;">[@@2022-04-11-061854] Loading trajectory...</div>
<div class="a" style="left:123px;top:368.3px;width:638px;height:0.8px;background:#ececec"></div>
<svg style="left:124.9px;top:371.1px" width="4.4" height="4.4" viewBox="0 0 6 6"><circle cx="3" cy="3" r="2.9" fill="#2f7ee0"/><path d="M3 2.5 V4.8" stroke="#fff" stroke-width="0.9"/><circle cx="3" cy="1.5" r="0.5" fill="#fff"/></svg>
<div class="t" style="left:132.7px;top:370.89px;font-size:6.02px;color:#333;transform:scaleX(0.8475);transform-origin:0 50%;">Message</div>
<div class="t" style="left:162.9px;top:370.89px;font-size:6.02px;color:#333;transform:scaleX(0.8475);transform-origin:0 50%;">2023-02-22 14:15:26</div>
<div class="t" style="left:212.9px;top:370.89px;font-size:6.02px;color:#333;transform:scaleX(0.8475);transform-origin:0 50%;">[@@2022-04-11-061854] Trajectory loading completed.</div>
<div class="a" style="left:123px;top:378.3px;width:638px;height:0.8px;background:#ececec"></div>
<svg style="left:124.9px;top:381.1px" width="4.4" height="4.4" viewBox="0 0 6 6"><circle cx="3" cy="3" r="2.9" fill="#2f7ee0"/><path d="M3 2.5 V4.8" stroke="#fff" stroke-width="0.9"/><circle cx="3" cy="1.5" r="0.5" fill="#fff"/></svg>
<div class="t" style="left:132.7px;top:380.89px;font-size:6.02px;color:#333;transform:scaleX(0.8475);transform-origin:0 50%;">Message</div>
<div class="t" style="left:162.9px;top:380.89px;font-size:6.02px;color:#333;transform:scaleX(0.8475);transform-origin:0 50%;">2023-02-22 14:15:26</div>
<div class="t" style="left:212.9px;top:380.89px;font-size:6.02px;color:#333;transform:scaleX(0.8475);transform-origin:0 50%;">[@@2022-04-11-065900] Loading trajectory...</div>
<div class="a" style="left:123px;top:388.3px;width:638px;height:0.8px;background:#ececec"></div>
<svg style="left:124.9px;top:391.1px" width="4.4" height="4.4" viewBox="0 0 6 6"><circle cx="3" cy="3" r="2.9" fill="#2f7ee0"/><path d="M3 2.5 V4.8" stroke="#fff" stroke-width="0.9"/><circle cx="3" cy="1.5" r="0.5" fill="#fff"/></svg>
<div class="t" style="left:132.7px;top:390.89px;font-size:6.02px;color:#333;transform:scaleX(0.8475);transform-origin:0 50%;">Message</div>
<div class="t" style="left:162.9px;top:390.89px;font-size:6.02px;color:#333;transform:scaleX(0.8475);transform-origin:0 50%;">2023-02-22 14:15:27</div>
<div class="t" style="left:212.9px;top:390.89px;font-size:6.02px;color:#333;transform:scaleX(0.8475);transform-origin:0 50%;">[@@2022-04-11-065900] Trajectory loading completed.</div>
<div class="a" style="left:162.3px;top:361px;width:0.8px;height:37px;background:#ececec"></div>
<div class="a" style="left:760.6px;top:361.6px;width:6.4px;height:36.4px;background:#fff;border-left:1px solid #e8e8e8"></div>
<svg style="left:761.5px;top:363px" width="4.5" height="3" viewBox="0 0 4.5 3"><path d="M0.5 2.5 L2.25 0.7 L4 2.5" fill="none" stroke="#555" stroke-width="0.7"/></svg>
<svg style="left:761.5px;top:393.5px" width="4.5" height="3" viewBox="0 0 4.5 3"><path d="M0.5 0.5 L2.25 2.3 L4 0.5" fill="none" stroke="#555" stroke-width="0.7"/></svg>
<div class="a" style="left:762px;top:387px;width:3.5px;height:5.5px;background:#c2c2c2"></div>
<div class="a" style="left:1px;top:397.8px;width:766px;height:1.4px;background:#dcdee3"></div>
<div class="a" style="left:1px;top:399.2px;width:766px;height:12.3px;background:#fdfdfd"></div>
<div class="a" style="left:0px;top:398px;width:1px;height:14px;background:#b4b4b4"></div>
<div class="a" style="left:334.7px;top:68.4px;width:383.40000000000003px;height:281.1px;background:#4a4a4a"></div>
<div class="a" style="left:334.7px;top:68.4px;width:383.40000000000003px;height:1px;background:#3a3a3a"></div>
<div class="a" style="left:337px;top:80.9px;width:378.70000000000005px;height:266.20000000000005px;background:#fff"></div>
<svg style="left:340px;top:72px" width="7" height="6" viewBox="0 0 7 6"><circle cx="2.6" cy="3.8" r="1.9" fill="#3a6fd8"/><circle cx="1.6" cy="2.6" r="1" fill="#e8902a"/><circle cx="5.4" cy="1.4" r="1.2" fill="#e87a30"/><circle cx="3.6" cy="4.4" r="0.9" fill="#40c0e0"/></svg>
<div class="t" style="left:352.6px;top:72.93px;font-size:6.14px;color:#d0d0d0;transform:scaleX(0.8475);transform-origin:0 50%;">Generate result</div>
<svg style="left:707.6px;top:73px" width="3.4" height="3.4" viewBox="0 0 4 4"><path d="M0.4 0.4 L3.6 3.6 M3.6 0.4 L0.4 3.6" stroke="#111" stroke-width="0.9"/></svg>
<div class="a" style="left:346px;top:87.5px;width:72px;height:8.1px;background:#fcc66f"></div>
<div class="t" style="left:347px;top:89.09px;font-size:6.02px;color:#222;transform:scaleX(0.8475);transform-origin:0 50%;">@@2022-04-11-014917</div>
<div class="t" style="left:347px;top:97.14px;font-size:6.02px;color:#222;transform:scaleX(0.8475);transform-origin:0 50%;">@@2022-04-11-021129</div>
<div class="t" style="left:347px;top:105.19px;font-size:6.02px;color:#222;transform:scaleX(0.8475);transform-origin:0 50%;">@@2022-04-11-051629</div>
<div class="t" style="left:347px;top:113.24px;font-size:6.02px;color:#222;transform:scaleX(0.8475);transform-origin:0 50%;">@@2022-04-11-061854</div>
<div class="t" style="left:347px;top:121.29px;font-size:6.02px;color:#222;transform:scaleX(0.8475);transform-origin:0 50%;">@@2022-04-11-065900</div>
<div class="a" style="left:420.3px;top:92.1px;width:0.8px;height:20.5px;background:#e3e3e3"></div>
<div class="a" style="left:706.4px;top:92.1px;width:0.8px;height:21.3px;background:#e3e3e3"></div>
<div class="a" style="left:420.3px;top:112.6px;width:286.09999999999997px;height:0.8px;background:#e3e3e3"></div>
<div class="a" style="left:470px;top:92.1px;width:236.39999999999998px;height:0.8px;background:#e3e3e3"></div>
<div class="a" style="left:420.3px;top:87.5px;width:0.8px;height:4px;background:#fff"></div>
<svg style="left:420.3px;top:88.4px" width="5.4" height="5.4" viewBox="0 0 6 6"><rect x="0" y="0" width="6" height="6" rx="0.8" fill="#1a5fc0"/><path d="M1.4 3.1 L2.6 4.3 L4.7 1.8" fill="none" stroke="#cfe0ff" stroke-width="0.6"/></svg>
<div class="t" style="left:429px;top:88.19px;font-size:6.02px;color:#222;transform:scaleX(0.8475);transform-origin:0 50%;">Organize Pictures</div>
<div class="t" style="left:427.6px;top:102.39px;font-size:6.02px;color:#333;transform:scaleX(0.8475);transform-origin:0 50%;">Time Delay (s):</div>
<div class="a" style="left:467.3px;top:100.5px;width:75.99999999999994px;height:8.099999999999994px;background:#fff;border:0.8px solid #e2e2e2;border-bottom-color:#c4c4c4;"></div>
<div class="t" style="left:470px;top:102.19px;font-size:6.02px;color:#222;transform:scaleX(0.8475);transform-origin:0 50%;">0.000</div>
<svg style="left:548.7px;top:102.2px" width="5.2" height="5.2" viewBox="0 0 6 6"><rect x="0.4" y="0.4" width="5.2" height="5.2" rx="0.6" fill="#d8d8d8" stroke="#c0c0c0" stroke-width="0.6"/><rect x="1.6" y="1.6" width="2.8" height="2.8" fill="#b8b8b8"/></svg>
<div class="t" style="left:556px;top:102.29px;font-size:6.02px;color:#b0b0b0;transform:scaleX(0.8475);transform-origin:0 50%;">Move Picture</div>
<svg style="left:593.4px;top:102.2px" width="5.2" height="5.2" viewBox="0 0 6 6"><rect x="0.45" y="0.45" width="5.1" height="5.1" rx="0.7" fill="#fff" stroke="#666" stroke-width="0.7"/></svg>
<div class="t" style="left:601px;top:102.29px;font-size:6.02px;color:#222;transform:scaleX(0.8475);transform-origin:0 50%;">Write EXIF</div>
<div class="a" style="left:420.3px;top:120.1px;width:0.8px;height:114.1px;background:#e3e3e3"></div>
<div class="a" style="left:705.6px;top:120.1px;width:0.8px;height:114.89999999999999px;background:#e3e3e3"></div>
<div class="a" style="left:420.3px;top:234.2px;width:285.3px;height:0.8px;background:#e3e3e3"></div>
<div class="a" style="left:483px;top:120.1px;width:222.60000000000002px;height:0.8px;background:#e3e3e3"></div>
<svg style="left:420.3px;top:115.5px" width="5.4" height="5.4" viewBox="0 0 6 6"><rect x="0" y="0" width="6" height="6" rx="0.8" fill="#1a5fc0"/><path d="M1.4 3.1 L2.6 4.3 L4.7 1.8" fill="none" stroke="#cfe0ff" stroke-width="0.6"/></svg>
<div class="t" style="left:429px;top:115.39px;font-size:6.02px;color:#222;transform:scaleX(0.8475);transform-origin:0 50%;">Point Cloud Processing</div>
<div class="t" style="left:427.6px;top:130.39px;font-size:6.02px;color:#333;transform:scaleX(0.8475);transform-origin:0 50%;">File Format:</div>
<div class="a" style="left:460.3px;top:128.3px;width:27.899999999999977px;height:8.899999999999977px;background:#fff;border:0.8px solid #a9a9a9"></div>
<div class="a" style="left:481.8px;top:129.10000000000002px;width:0.8px;height:7.299999999999978px;background:#c8c8c8"></div>
<svg style="left:484.0px;top:132.15px" width="2.2" height="1.4" viewBox="0 0 2.2 1.4"><path d="M0 0 H2.2 L1.1 1.4Z" fill="#888"/></svg>
<div class="t" style="left:462.5px;top:130.34px;font-size:6.02px;color:#222;transform:scaleX(0.8475);transform-origin:0 50%;">las</div>
<div class="a" style="left:490.8px;top:128.3px;width:39.80000000000001px;height:8.899999999999977px;background:#fff;border:0.8px solid #b8b8b8;border-radius:1.5px"></div>
<div class="t" style="left:490.8px;width:39.80000000000001px;text-align:center;top:129.64px;font-size:6.02px;color:#222;transform:scaleX(0.8475)">Filter Settings</div>
<div class="t" style="left:536.3px;top:130.39px;font-size:6.02px;color:#333;transform:scaleX(0.8475);transform-origin:0 50%;">Sampling Rate:</div>
<div class="a" style="left:576.3px;top:128.3px;width:25.700000000000045px;height:8.899999999999977px;background:#fff;border:0.8px solid #a9a9a9"></div>
<div class="a" style="left:595.5px;top:129.10000000000002px;width:0.8px;height:7.299999999999978px;background:#c8c8c8"></div>
<svg style="left:597.75px;top:132.15px" width="2.2" height="1.4" viewBox="0 0 2.2 1.4"><path d="M0 0 H2.2 L1.1 1.4Z" fill="#888"/></svg>
<div class="t" style="left:578.5px;top:130.34px;font-size:6.02px;color:#222;transform:scaleX(0.8475);transform-origin:0 50%;">100%</div>
<svg style="left:607.3px;top:130.2px" width="5.4" height="5.4" viewBox="0 0 6 6"><rect x="0" y="0" width="6" height="6" rx="0.8" fill="#1a5fc0"/><path d="M1.4 3.1 L2.6 4.3 L4.7 1.8" fill="none" stroke="#cfe0ff" stroke-width="0.6"/></svg>
<div class="t" style="left:614.5px;top:130.39px;font-size:6.02px;color:#222;transform:scaleX(0.8475);transform-origin:0 50%;">Point Clouds Optimization</div>
<div class="a" style="left:424.7px;top:139.8px;width:277.7px;height:30.599999999999994px;border:0.8px solid #d0d0d0;background:#fff"></div>
<div class="a" style="left:496.8px;top:150.6px;width:204.79999999999995px;height:19px;background:#f6f6f6"></div>
<div class="a" style="left:424.7px;top:150px;width:277.7px;height:0.7px;background:#e8e8e8"></div>
<div class="a" style="left:424.7px;top:160px;width:277.7px;height:0.7px;background:#e8e8e8"></div>
<div class="a" style="left:496px;top:139.8px;width:0.7px;height:30.6px;background:#e8e8e8"></div>
<div class="a" style="left:693px;top:140.6px;width:0.7px;height:19.4px;background:#efefef"></div>
<svg style="left:696px;top:144.4px" width="2" height="1.3" viewBox="0 0 2 1.3"><path d="M0 0 H2 L1 1.3Z" fill="#999"/></svg>
<svg style="left:696px;top:154.4px" width="2" height="1.3" viewBox="0 0 2 1.3"><path d="M0 0 H2 L1 1.3Z" fill="#999"/></svg>
<div class="t" style="left:428px;top:142.69px;font-size:6.02px;color:#333;transform:scaleX(0.8475);transform-origin:0 50%;">Version</div>
<div class="t" style="left:499px;top:142.69px;font-size:6.02px;color:#222;transform:scaleX(0.8475);transform-origin:0 50%;">1.2</div>
<div class="t" style="left:428px;top:152.69px;font-size:6.02px;color:#333;transform:scaleX(0.8475);transform-origin:0 50%;">Segment Way</div>
<div class="t" style="left:499px;top:152.69px;font-size:6.02px;color:#b4b4b4;transform:scaleX(0.8475);transform-origin:0 50%;">File Size (Mb)</div>
<div class="t" style="left:428px;top:162.69px;font-size:6.02px;color:#333;transform:scaleX(0.8475);transform-origin:0 50%;">Size</div>
<div class="t" style="left:499px;top:162.69px;font-size:6.02px;color:#b4b4b4;transform:scaleX(0.8475);transform-origin:0 50%;">300.000</div>
<svg style="left:427px;top:174.8px" width="5.4" height="5.4" viewBox="0 0 6 6"><rect x="0" y="0" width="6" height="6" rx="0.8" fill="#1a5fc0"/><path d="M1.4 3.1 L2.6 4.3 L4.7 1.8" fill="none" stroke="#cfe0ff" stroke-width="0.6"/></svg>
<div class="t" style="left:433.9px;top:175.19px;font-size:6.02px;color:#333;transform:scaleX(0.8475);transform-origin:0 50%;">Coloring</div>
<div class="a" style="left:458.5px;top:173px;width:32.69999999999999px;height:9.199999999999989px;background:#fff;border:0.8px solid #a9a9a9"></div>
<div class="a" style="left:485.2px;top:173.8px;width:0.8px;height:7.599999999999989px;background:#c8c8c8"></div>
<svg style="left:487.2px;top:177.0px" width="2.2" height="1.4" viewBox="0 0 2.2 1.4"><path d="M0 0 H2.2 L1.1 1.4Z" fill="#888"/></svg>
<div class="t" style="left:460.7px;top:175.19px;font-size:6.02px;color:#222;transform:scaleX(0.8475);transform-origin:0 50%;">0~65535</div>
<svg style="left:496px;top:174.8px" width="5.4" height="5.4" viewBox="0 0 6 6"><rect x="0" y="0" width="6" height="6" rx="0.8" fill="#1a5fc0"/><path d="M1.4 3.1 L2.6 4.3 L4.7 1.8" fill="none" stroke="#cfe0ff" stroke-width="0.6"/></svg>
<div class="t" style="left:503.8px;top:175.19px;font-size:6.02px;color:#222;transform:scaleX(0.8475);transform-origin:0 50%;">Remove Unshaded Points</div>
<svg style="left:570.4px;top:175.1px" width="5.2" height="5.2" viewBox="0 0 6 6"><rect x="0.45" y="0.45" width="5.1" height="5.1" rx="0.7" fill="#fff" stroke="#666" stroke-width="0.7"/></svg>
<div class="t" style="left:578px;top:175.19px;font-size:6.02px;color:#333;transform:scaleX(0.8475);transform-origin:0 50%;">Filter Tower Shadow</div>
<div class="t" style="left:427.6px;top:187.09px;font-size:6.02px;color:#333;transform:scaleX(0.8475);transform-origin:0 50%;">Trigger Filter Interval (m):</div>
<div class="a" style="left:492.4px;top:185.3px;width:78.60000000000002px;height:8.299999999999983px;background:#fff;border:0.8px solid #e2e2e2;border-bottom-color:#c4c4c4;"></div>
<div class="t" style="left:495px;top:186.99px;font-size:6.02px;color:#222;transform:scaleX(0.8475);transform-origin:0 50%;">10.000</div>
<div class="t" style="left:577px;top:187.09px;font-size:6.02px;color:#333;transform:scaleX(0.8475);transform-origin:0 50%;">Cover Radius (m):</div>
<div class="a" style="left:624px;top:185.3px;width:78.39999999999998px;height:8.299999999999983px;background:#fff;border:0.8px solid #e2e2e2;border-bottom-color:#c4c4c4;"></div>
<div class="t" style="left:627px;top:186.99px;font-size:6.02px;color:#222;transform:scaleX(0.8475);transform-origin:0 50%;">8.500</div>
<div class="t" style="left:427.6px;top:197.99px;font-size:6.02px;color:#333;transform:scaleX(0.8475);transform-origin:0 50%;">Mask File:</div>
<div class="a" style="left:456.6px;top:196.5px;width:210.69999999999993px;height:8.099999999999994px;background:#fff;border:0.8px solid #e2e2e2;border-bottom-color:#c4c4c4;"></div>
<div class="a" style="left:670px;top:196.6px;width:32.39999999999998px;height:7.900000000000006px;background:#fff;border:0.8px solid #b8b8b8;border-radius:1.5px"></div>
<div class="t" style="left:670px;width:32.39999999999998px;text-align:center;top:197.44px;font-size:6.02px;color:#222;transform:scaleX(0.8475)">...</div>
<div class="a" style="left:424.7px;top:208px;width:277.7px;height:23px;border:0.8px solid #d0d0d0;background:#fff"></div>
<div class="a" style="left:424.7px;top:217.7px;width:277.7px;height:0.8px;background:#e4e4e4"></div>
<div class="a" style="left:424.7px;top:227.4px;width:277.7px;height:0.8px;background:#e4e4e4"></div>
<div class="a" style="left:496px;top:208px;width:0.8px;height:19.4px;background:#e4e4e4"></div>
<div class="a" style="left:693px;top:218.5px;width:0.8px;height:9px;background:#ececec"></div>
<svg style="left:696px;top:222.0px" width="2" height="1.3" viewBox="0 0 2 1.3"><path d="M0 0 H2 L1 1.3Z" fill="#999"/></svg>
<div class="t" style="left:428px;top:210.49px;font-size:6.02px;color:#333;transform:scaleX(0.8475);transform-origin:0 50%;">Scanner Name</div>
<div class="t" style="left:499.5px;top:210.49px;font-size:6.02px;color:#222;transform:scaleX(0.8475);transform-origin:0 50%;">Scanner1</div>
<div class="t" style="left:428px;top:220.19px;font-size:6.02px;color:#333;transform:scaleX(0.8475);transform-origin:0 50%;">Camera Name</div>
<div class="t" style="left:499.5px;top:220.19px;font-size:6.02px;color:#222;transform:scaleX(0.8475);transform-origin:0 50%;">Camera1</div>
<svg style="left:420.8px;top:239.5px" width="5.2" height="5.2" viewBox="0 0 6 6"><rect x="0.45" y="0.45" width="5.1" height="5.1" rx="0.7" fill="#fff" stroke="#666" stroke-width="0.7"/></svg>
<div class="t" style="left:429px;top:239.19px;font-size:6.02px;color:#333;transform:scaleX(0.8475);transform-origin:0 50%;">Generate Result Report</div>
<div class="t" style="left:426.2px;top:256.79px;font-size:6.02px;color:#333;transform:scaleX(0.8475);transform-origin:0 50%;">Output Directory:</div>
<div class="a" style="left:471.6px;top:254.6px;width:197.5px;height:8.799999999999983px;background:#fff;border:0.8px solid #e2e2e2;border-bottom-color:#c4c4c4;"></div>
<div class="t" style="left:474.6px;top:256.69px;font-size:6.02px;color:#222;transform:scaleX(0.8475);transform-origin:0 50%;">G:/2-CoPre-Project/CHC_20230222141105/Results</div>
<div class="a" style="left:671.3px;top:254.6px;width:33.30000000000007px;height:8.799999999999983px;background:#fff;border:0.8px solid #b8b8b8;border-radius:1.5px"></div>
<div class="t" style="left:671.3px;width:33.30000000000007px;text-align:center;top:255.89px;font-size:6.02px;color:#222;transform:scaleX(0.8475)">...</div>
<div class="a" style="left:663px;top:265.8px;width:41.60000000000002px;height:8.800000000000011px;background:#fff;border:0.8px solid #b8b8b8;border-radius:1.5px"></div>
<div class="t" style="left:663px;width:41.60000000000002px;text-align:center;top:267.09px;font-size:6.02px;color:#222;transform:scaleX(0.8475)">Batch Settings</div>
<div class="a" style="left:643px;top:334.2px;width:32.799999999999955px;height:8.199999999999989px;background:#fff;border:0.8px solid #b8b8b8;border-radius:1.5px"></div>
<div class="t" style="left:643px;width:32.799999999999955px;text-align:center;top:335.19px;font-size:6.02px;color:#222;transform:scaleX(0.8475)">OK</div>
<div class="a" style="left:678.5px;top:334.2px;width:32.5px;height:8.199999999999989px;background:#fff;border:0.8px solid #b8b8b8;border-radius:1.5px"></div>
<div class="t" style="left:678.5px;width:32.5px;text-align:center;top:335.19px;font-size:6.02px;color:#222;transform:scaleX(0.8475)">Cancel</div>
<div class="a" style="left:0px;top:411.6px;width:768px;height:1.4px;background:#767676"></div>
</body></html>
